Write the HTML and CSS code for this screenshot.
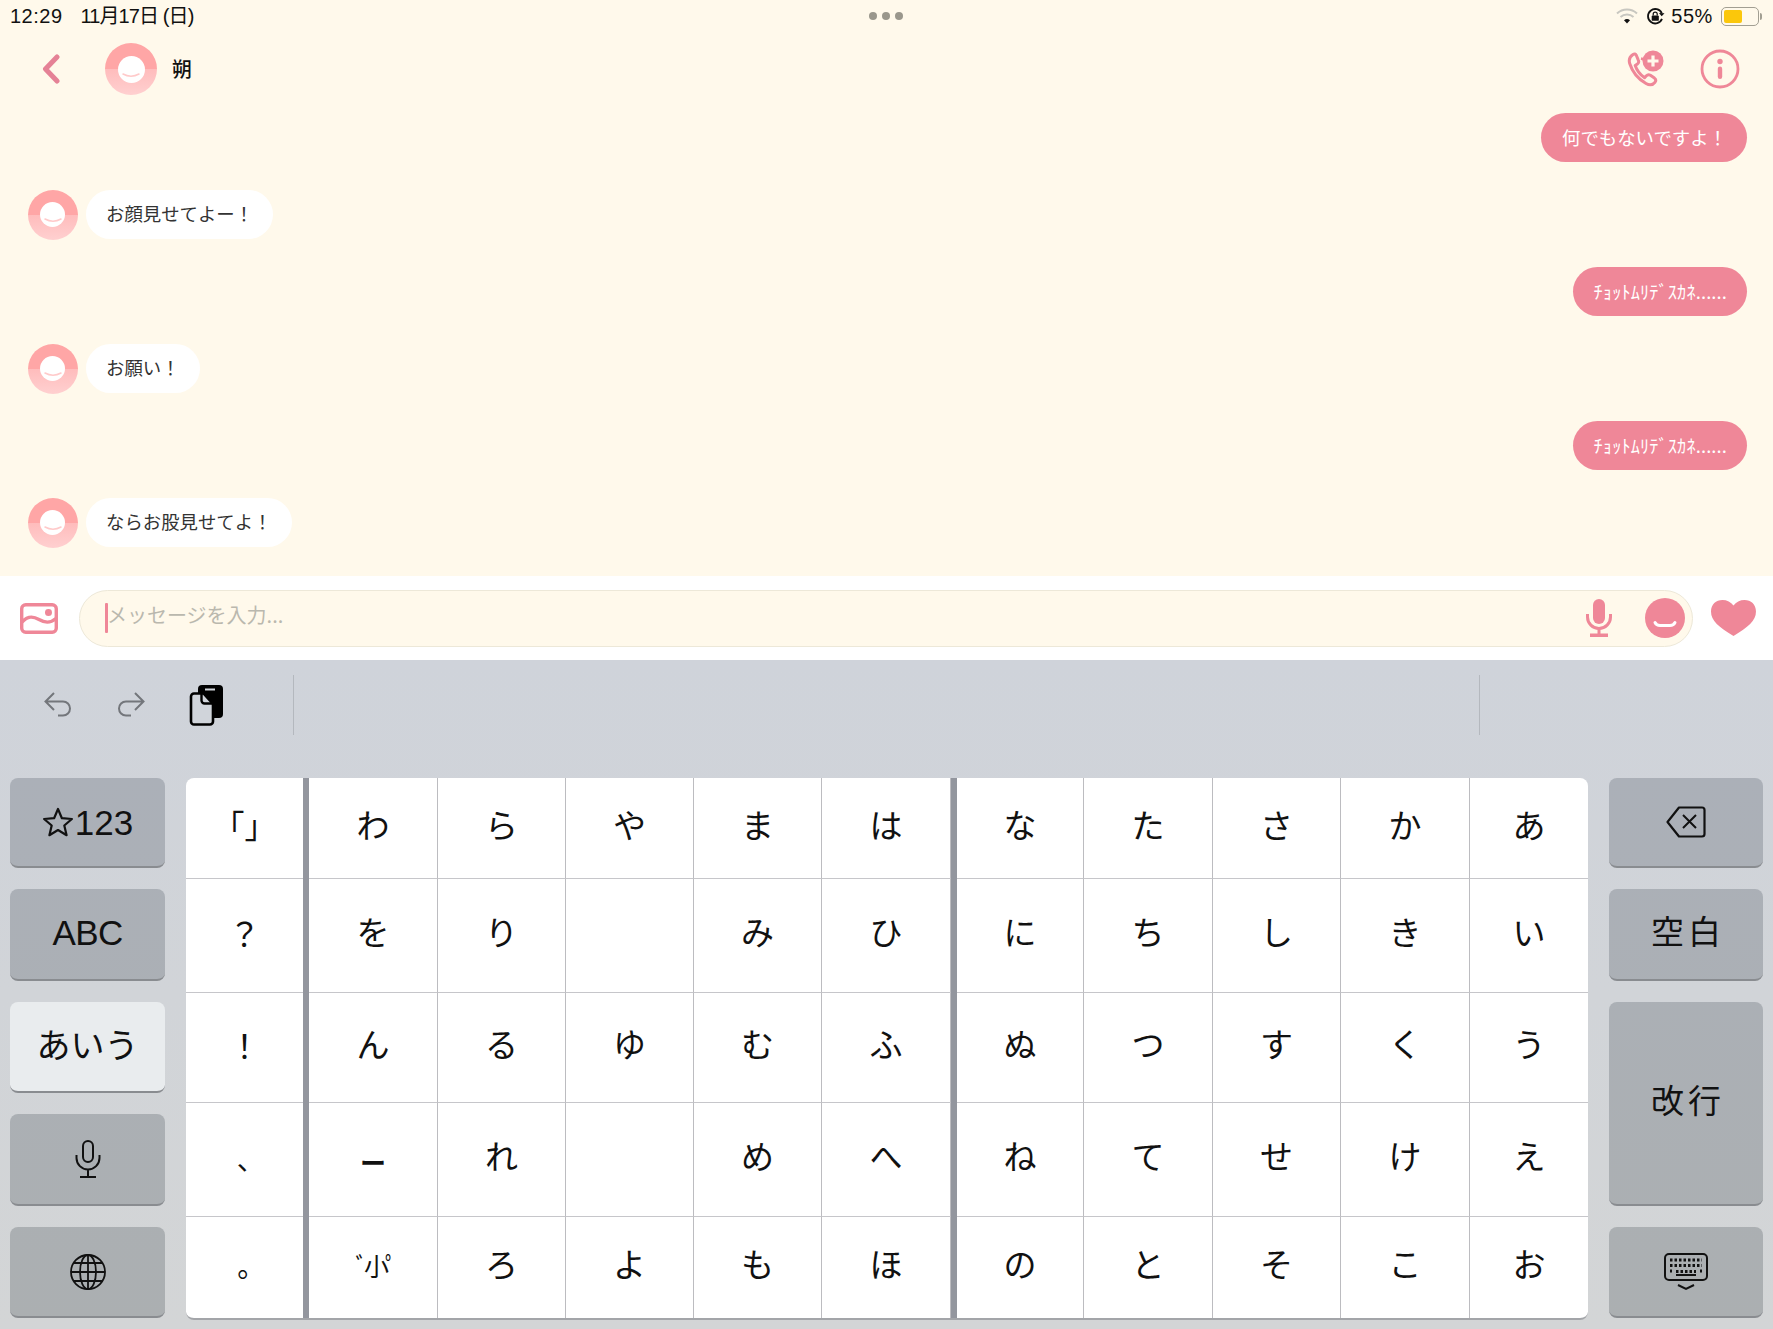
FILE: index.html
```html
<!DOCTYPE html>
<html lang="ja">
<head>
<meta charset="utf-8">
<title>チャット</title>
<link rel="stylesheet" href="styles.css">
</head>
<body>
<main class="screen">
  <section class="chat">
    <div class="status">
      <div class="status-left"><span class="time">12:29</span><span class="date">11月17日 (日)</span></div>
      <div class="dots"><i></i><i></i><i></i></div>
      <div class="status-right">
        <svg class="wifi" viewBox="0 0 22 16"><path d="M1 5.500a14.500 14.500 0 0 1 20 0" fill="none" stroke="#c8c7c0" stroke-width="2"/><path d="M4.500 9a9.500 9.500 0 0 1 13 0" fill="none" stroke="#c8c7c0" stroke-width="2"/><path d="M8 12.300a4.600 4.600 0 0 1 6 0L11 15.500z" fill="#111"/></svg>
        <svg class="rot" viewBox="0 0 20 20"><path d="M16.800 12.500A7.600 7.600 0 1 1 16.600 6.500" fill="none" stroke="#111" stroke-width="1.900"/><path d="M19.500 6.500l-3 3.200-2.800-3.400z" fill="#111"/><rect x="6" y="9" width="7.500" height="5.600" rx="1" fill="#111"/><path d="M7.600 9V7.400a2.100 2.100 0 0 1 4.200 0V9" fill="none" stroke="#111" stroke-width="1.300"/></svg>
        <span class="pct">55%</span>
        <div class="battery"><div class="level"></div></div><div class="nub"></div>
      </div>
    </div>
    <header class="head">
      <svg class="back" viewBox="0 0 18 30"><path d="M15 3L3.500 15 15 27" fill="none" stroke="#e58296" stroke-width="5" stroke-linecap="round" stroke-linejoin="round"/></svg>
      <div class="avatar big"><div class="face"><svg viewBox="0 0 20 8"><path d="M2 2q8 4.500 16 0" fill="none" stroke="#ffcaca" stroke-width="1.500" stroke-linecap="round"/></svg></div></div>
      <span class="name">朔</span>
      <div class="head-actions">
        <svg class="call" viewBox="0 0 38 38"><path d="M6 4.500c-3 2-4.500 5-3.300 9 2.500 8 8.500 15.500 16.300 20 3.500 2 6.800 1.500 9-1.300 1.200-1.600.8-3-.6-4.100l-4-2.800c-1.600-1-2.900-.7-4 .5l-1.800 1.900C13.500 25 9.700 20 8.200 15.500l2.200-1.500c1.500-1.100 1.600-2.400.9-3.900L9.400 5.500C8.600 3.900 7.400 3.600 6 4.500z" fill="none" stroke="#ef8798" stroke-width="3" stroke-linejoin="round"/><path d="M14 8.500a11 11 0 0 1 7 5" fill="none" stroke="#ef8798" stroke-width="2.800"/><circle cx="26" cy="11" r="10.500" fill="#ef8798"/><path d="M26 5.500v11M20.500 11h11" stroke="#fff9eb" stroke-width="3.200"/></svg>
        <svg class="info" viewBox="0 0 40 40"><circle cx="20" cy="20" r="18" fill="none" stroke="#ef8798" stroke-width="2.800"/><circle cx="20" cy="12.500" r="2.700" fill="#ef8798"/><rect x="17.800" y="17.500" width="4.400" height="12.500" rx="2.200" fill="#ef8798"/></svg>
      </div>
    </header>
    <div class="log">
      <div class="msg me"><p class="bubble pink">何でもないですよ！</p></div>
      <div class="msg you"><div class="avatar"><div class="face"><svg viewBox="0 0 20 8"><path d="M2 2q8 4.500 16 0" fill="none" stroke="#ffcaca" stroke-width="1.500" stroke-linecap="round"/></svg></div></div><p class="bubble white">お顔見せてよー！</p></div>
      <div class="msg me"><p class="bubble pink kana">ﾁｮｯﾄﾑﾘﾃﾞｽｶﾈ......</p></div>
      <div class="msg you"><div class="avatar"><div class="face"><svg viewBox="0 0 20 8"><path d="M2 2q8 4.500 16 0" fill="none" stroke="#ffcaca" stroke-width="1.500" stroke-linecap="round"/></svg></div></div><p class="bubble white">お願い！</p></div>
      <div class="msg me"><p class="bubble pink kana">ﾁｮｯﾄﾑﾘﾃﾞｽｶﾈ......</p></div>
      <div class="msg you"><div class="avatar"><div class="face"><svg viewBox="0 0 20 8"><path d="M2 2q8 4.500 16 0" fill="none" stroke="#ffcaca" stroke-width="1.500" stroke-linecap="round"/></svg></div></div><p class="bubble white">ならお股見せてよ！</p></div>
    </div>
  </section>

  <section class="composer">
    <svg class="pic" viewBox="0 0 38 31"><rect x="1.700" y="1.700" width="34.600" height="27.600" rx="4" fill="none" stroke="#ef8798" stroke-width="3.400"/><path d="M2 19c6-6.500 11-6 17-2.500s11 4 17-1" fill="none" stroke="#ef8798" stroke-width="3.400"/><circle cx="28.500" cy="9.500" r="3.500" fill="#ef8798"/></svg>
    <div class="field">
      <i class="caret"></i><span class="hint">メッセージを入力...</span>
      <svg class="mic" viewBox="0 0 26 38"><rect x="7" y="0" width="12" height="25" rx="6" fill="#ef8798"/><path d="M1.500 15v3a11.500 11.500 0 0 0 23 0v-3" fill="none" stroke="#ef8798" stroke-width="3"/><path d="M13 30v5" stroke="#ef8798" stroke-width="3"/><rect x="4" y="34.500" width="18" height="3.500" fill="#ef8798"/></svg>
      <svg class="smile" viewBox="0 0 40 40"><circle cx="20" cy="20" r="20" fill="#ef8798"/><path d="M10 24.500q1.500 3 5 3h10q3.500 0 5-3" fill="none" stroke="#fff" stroke-width="3" stroke-linecap="round"/></svg>
    </div>
    <svg class="heart" viewBox="0 0 45 36"><path d="M22.500 36C8 27 0 21 0 11.500 0 4.500 5 0 11.500 0c4.500 0 8.500 2 11 5.500C25 2 29 0 33.500 0 40 0 45 4.500 45 11.500 45 21 37 27 22.500 36z" fill="#ef8798"/></svg>
  </section>

  <section class="keyboard">
    <div class="tools">
      <svg class="undo" viewBox="0 0 28 26"><path d="M10 2L1.500 10.500 10 19M2 10.500h17a7 7 0 0 1 0 14h-5" fill="none" stroke="#73767b" stroke-width="2"/></svg>
      <svg class="redo" viewBox="0 0 28 26"><path d="M18 2l8.500 8.500L18 19M26 10.500H9a7 7 0 0 0 0 14h5" fill="none" stroke="#73767b" stroke-width="2"/></svg>
      <svg class="clip" viewBox="0 0 34 41"><rect x="9" y="0" width="25" height="33" rx="4" fill="#000"/><rect x="16" y="3.500" width="10" height="2" fill="#d0d4da"/><path d="M5 8.500h9.500L24 19v17.500a3 3 0 0 1-3 3H5a3 3 0 0 1-3-3v-25a3 3 0 0 1 3-3z" fill="#d0d4da" stroke="#000" stroke-width="2.600"/><path d="M12.500 8.500v7a3 3 0 0 0 3 3H24" fill="none" stroke="#000" stroke-width="2.400"/></svg>
      <i class="tool-line first"></i>
      <i class="tool-line second"></i>
    </div>
    <div class="keys">
      <div class="side">
        <div class="skey big-label"><svg class="star" viewBox="0 0 32 30"><path d="M16 2l3.900 9.200 10 .8-7.600 6.500 2.300 9.700L16 23l-8.600 5.200 2.300-9.700L2.100 12l10-.8z" fill="none" stroke="#111" stroke-width="2.200" stroke-linejoin="round"/></svg>123</div>
        <div class="skey big-label raised">ABC</div>
        <div class="skey on">あいう</div>
        <div class="skey"><svg class="kmic" viewBox="0 0 26 38"><rect x="8" y="1" width="10" height="21" rx="5" fill="none" stroke="#111" stroke-width="2"/><path d="M1.500 15v3a11.500 11.500 0 0 0 23 0v-3M13 30v7M5 37h16" fill="none" stroke="#111" stroke-width="2"/></svg></div>
        <div class="skey"><svg class="globe" viewBox="0 0 36 36"><circle cx="18" cy="18" r="17" fill="none" stroke="#111" stroke-width="1.800"/><ellipse cx="18" cy="18" rx="8" ry="17" fill="none" stroke="#111" stroke-width="1.800"/><path d="M18 1v34M1 18h34M4 9h28M4 27h28" fill="none" stroke="#111" stroke-width="1.800"/></svg></div>
      </div>
      <div class="grid">
        <i class="sep one"></i><i class="sep two"></i>
        <span class="k brackets">「」</span><span class="k">わ</span><span class="k">ら</span><span class="k">や</span><span class="k">ま</span><span class="k">は</span><span class="k">な</span><span class="k">た</span><span class="k">さ</span><span class="k">か</span><span class="k end">あ</span>
        <span class="k sym">？</span><span class="k">を</span><span class="k">り</span><span class="k"></span><span class="k">み</span><span class="k">ひ</span><span class="k">に</span><span class="k">ち</span><span class="k">し</span><span class="k">き</span><span class="k end">い</span>
        <span class="k sym">！</span><span class="k">ん</span><span class="k">る</span><span class="k">ゆ</span><span class="k">む</span><span class="k">ふ</span><span class="k">ぬ</span><span class="k">つ</span><span class="k">す</span><span class="k">く</span><span class="k end">う</span>
        <span class="k half comma">､</span><span class="k bar">ー</span><span class="k">れ</span><span class="k"></span><span class="k">め</span><span class="k">へ</span><span class="k">ね</span><span class="k">て</span><span class="k">せ</span><span class="k">け</span><span class="k end">え</span>
        <span class="k half stop">｡</span><span class="k mark">ﾞ小ﾟ</span><span class="k">ろ</span><span class="k">よ</span><span class="k">も</span><span class="k">ほ</span><span class="k">の</span><span class="k">と</span><span class="k">そ</span><span class="k">こ</span><span class="k end">お</span>
      </div>
      <div class="side right">
        <div class="skey"><svg class="del" viewBox="0 0 40 32"><path d="M13 1.500h23a2.500 2.500 0 0 1 2.500 2.500v24a2.500 2.500 0 0 1-2.500 2.500H13L1.500 16z" fill="none" stroke="#111" stroke-width="2.200" stroke-linejoin="round"/><path d="M17 9l13 13M30 9L17 22" stroke="#111" stroke-width="2"/></svg></div>
        <div class="skey wide">空白</div>
        <div class="skey wide ret">改行</div>
        <div class="skey hide"><svg class="kbd" viewBox="0 0 44 38"><rect x="1" y="1" width="42" height="26" rx="4" fill="none" stroke="#111" stroke-width="2"/><path d="M6 7h32M6 12.500h32M6 18h2M12 18.500h20M36 18h2" fill="none" stroke="#111" stroke-width="3" stroke-dasharray="2.500 2"/><path d="M12 22h20" stroke="#111" stroke-width="2"/><path d="M14 32l8 4 8-4" fill="none" stroke="#111" stroke-width="2"/></svg></div>
      </div>
    </div>
  </section>
</main>
</body>
</html>
```
FILE: styles.css
```css
* { box-sizing: border-box; }
html, body { margin: 0; padding: 0; }
body { width: 1773px; height: 1329px; overflow: hidden; background: #fff; font-family: "Noto Sans CJK JP", "Liberation Sans", sans-serif; color: #111; }
p { margin: 0; }
i { display: block; }
svg { display: block; }
.screen { display: flex; flex-direction: column; height: 1329px; }

.chat { height: 576px; background: #fff9eb; }
.status { height: 32px; display: flex; align-items: center; position: relative; padding: 0 11px 0 10px; justify-content: space-between; }
.status-left { display: flex; gap: 18px; font-size: 20px; line-height: 32px; font-family: "Liberation Sans", "Noto Sans CJK JP", sans-serif; }
.time { letter-spacing: .5px; }
.date { letter-spacing: -.9px; }
.dots { position: absolute; left: 869px; top: 12px; display: flex; gap: 5px; }
.dots i { width: 8px; height: 8px; border-radius: 50%; background: #9a978c; }
.status-right { display: flex; align-items: center; }
.wifi { width: 22px; height: 16px; }
.rot { width: 19px; height: 19px; margin-left: 8px; }
.pct { font-family: "Liberation Sans", sans-serif; font-size: 20px; margin-left: 6px; letter-spacing: .6px; }
.battery { width: 38px; height: 19px; border: 1.500px solid #a29f92; border-radius: 5px; padding: 2px; margin-left: 8px; }
.level { width: 18px; height: 100%; background: #fbc70b; border-radius: 2px; }
.nub { width: 2px; height: 7px; background: #a29f92; border-radius: 0 2px 2px 0; margin-left: 1px; }

.head { height: 74px; display: flex; align-items: center; padding: 0 33px 0 42px; }
.back { width: 18px; height: 30px; }
.avatar { width: 50px; height: 50px; border-radius: 50%; flex: none; display: flex; align-items: center; justify-content: center; background: linear-gradient(#ffa6a6 0 50%, #ffbcbc 50%, #ffd0d0 100%); }
.avatar.big { width: 52px; height: 52px; margin-left: 45px; }
.face { width: 25px; height: 25px; border-radius: 50%; background: #fff; display: flex; align-items: flex-end; justify-content: center; padding-bottom: 2px; }
.big .face { width: 27px; height: 27px; padding-bottom: 3px; }
.face svg { width: 20px; height: 8px; flex: none; }
.name { font-size: 20px; font-weight: 500; margin-left: 15px; padding-bottom: 2px; }
.head-actions { margin-left: auto; display: flex; align-items: center; gap: 35px; }
.call { width: 38px; height: 38px; }
.info { width: 40px; height: 40px; }

.log { display: flex; flex-direction: column; gap: 28px; padding: 7px 26px 0 27.500px; }
.msg { display: flex; align-items: center; height: 49px; }
.msg.me { justify-content: flex-end; }
.bubble { height: 49px; border-radius: 25px; font-size: 18.400px; }
.pink { background: #ef8798; color: #fff; line-height: 49px; padding: 0 20px 0 21px; }
.white { background: #fff; color: #333; margin-left: 8.500px; line-height: 47px; padding: 0 20px 2px; }
.kana { letter-spacing: .1px; }

.composer { height: 84px; background: #fff; display: flex; align-items: center; padding: 0 17px 0 20px; }
.pic { width: 38px; height: 31px; }
.field { width: 1615px; height: 57px; margin: 0 0 0 21px; border: 1.500px solid #ede8d8; border-radius: 29px; background: #fff9eb; display: flex; align-items: center; padding: 0 7px 0 25px; }
.caret { width: 3px; height: 30px; background: #ef8798; border-radius: 1px; }
.hint { font-size: 20px; color: #bab8ae; margin-left: -1px; padding-bottom: 7px; }
.mic { width: 26px; height: 38px; margin-left: auto; }
.smile { width: 40px; height: 40px; margin-left: 33px; }
.heart { width: 45px; height: 36px; margin-left: 18px; }

.keyboard { height: 669px; background: linear-gradient(#cfd3da, #d3d5d6); display: flex; flex-direction: column; }
.tools { height: 118px; display: flex; align-items: flex-start; padding: 25px 0 0 44px; position: relative; }
.undo { width: 28px; height: 26px; margin-top: 6px; }
.redo { width: 28px; height: 26px; margin: 6px 0 0 45px; }
.clip { width: 34px; height: 41px; margin-left: 44px; }
.tool-line { position: absolute; top: 15px; width: 1px; height: 60px; background: #b4b8be; }
.tool-line.first { left: 293px; }
.tool-line.second { left: 1479px; }

.keys { display: flex; gap: 21px; padding: 0 10px; }
.side { width: 155px; display: grid; grid-template-rows: 90px 92px 91px 92px 91px; row-gap: 21px; }
.side.right { width: 154px; }
.skey { background: linear-gradient(#abb0b8 0 58%, #abafb1 100%) fixed; border-bottom: 2px solid #898c90; border-radius: 8px; display: flex; align-items: center; justify-content: center; font-size: 34px; line-height: 1; }
.skey.on { background: #e9ecee; padding-bottom: 6px; }
.big-label { font-family: "Liberation Sans", sans-serif; font-size: 35px; }
.raised { padding-bottom: 4px; letter-spacing: -.6px; }
.star { width: 32px; height: 30px; margin-right: 1px; }
.wide { letter-spacing: 4px; padding: 0 0 8px 4px; font-size: 33px; }
.right .ret { grid-row: 3 / span 2; }
.kmic { width: 26px; height: 38px; }
.globe { width: 36px; height: 36px; }
.del { width: 40px; height: 32px; }
.kbd { width: 44px; height: 38px; }

.grid { width: 1402px; display: grid; grid-template-columns: 117px 6px 129px 128px 128px 128px 129px 6px 127px 129px 128px 129px 118px; grid-template-rows: 101px 114px 110px 114px 101px; background: #fff; border-radius: 8px; overflow: hidden; border-bottom: 2px solid #a3a5a9; }
.sep { background: #93969e; grid-row: 1 / -1; }
.sep.one { grid-column: 2; }
.sep.two { grid-column: 8; }
.k { display: flex; align-items: center; justify-content: center; font-size: 33px; line-height: 1; padding-bottom: 8px; border-right: 1px solid #bcbcc0; border-bottom: 1px solid #c6c6ca; }
.k.end { border-right: 0; }
.k.brackets, .k.sym, .k.half { border-right: 0; }
.k.brackets { font-size: 32px; }
.k.sym { font-size: 32px; }
.k.half { font-size: 28px; }
.k.comma { padding-bottom: 4px; }
.k.stop { padding-bottom: 6px; }
.k.bar { font-size: 26px; font-weight: 700; padding: 5px 0 0; }
.k.mark { font-size: 25px; letter-spacing: -4px; padding: 0 0 4px 3px; }
.grid > .k:nth-last-child(-n+11) { border-bottom: 0; }
```
